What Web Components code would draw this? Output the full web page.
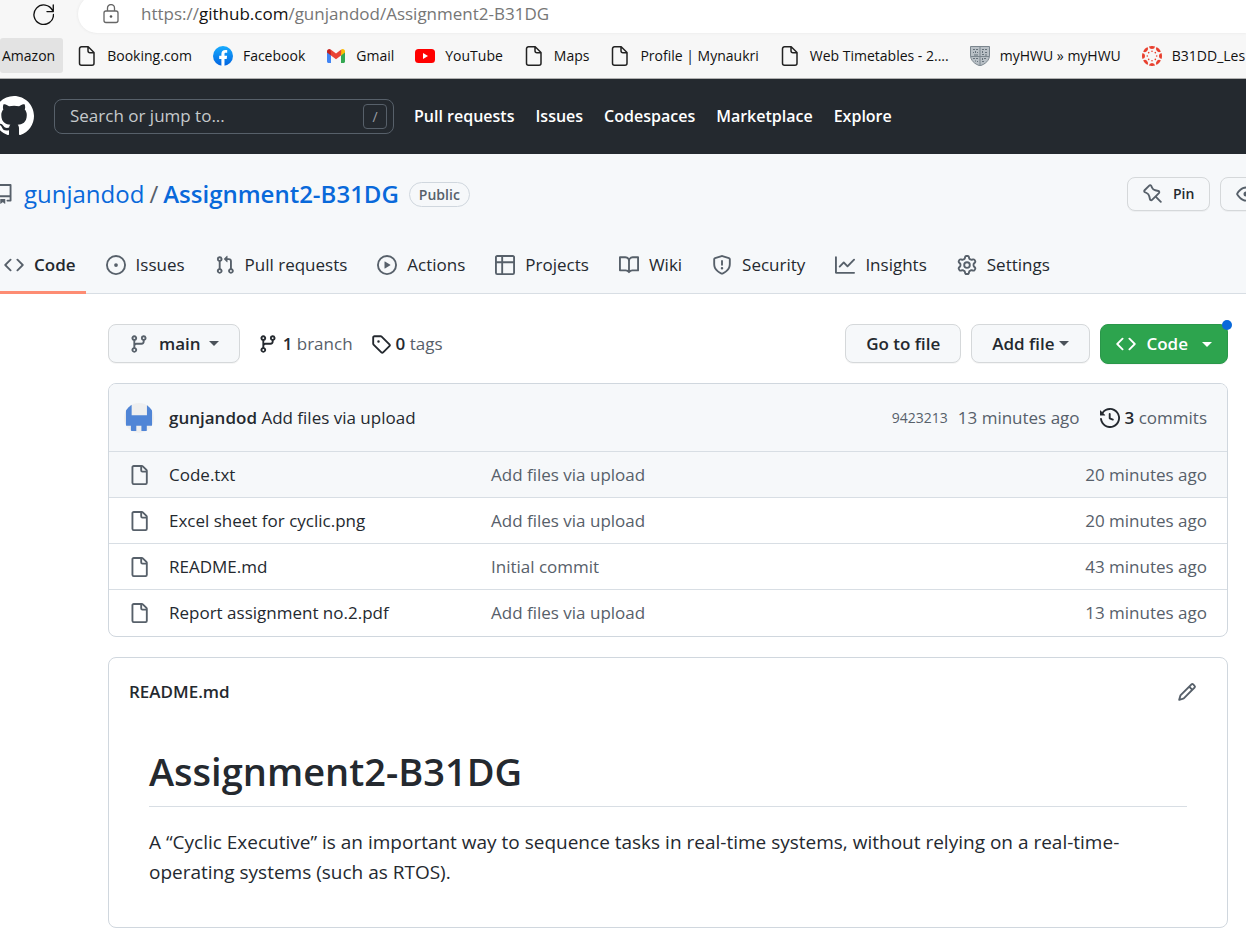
<!DOCTYPE html>
<html lang="en">
<head>
<meta charset="utf-8">
<title>gunjandod/Assignment2-B31DG</title>
<style>
  html { background: #fff; }
  body {
    margin: 0;
    overflow-x: hidden;
    font-family: "Open Sans", "Noto Sans", sans-serif;
    font-size: 17px;
    line-height: 26px;
    color: #24292f;
    --muted: #57606a;
    --link: #0969da;
    --line: #d0d7de;
    --subtle: #f6f8fa;
  }
</style>
</head>
<body>
<browser-bar></browser-bar>
<site-header></site-header>
<repo-header></repo-header>
<repo-page></repo-page>

<script>
const ICONS = {
  mark: 'M8 0C3.58 0 0 3.58 0 8c0 3.54 2.29 6.53 5.47 7.59.4.07.55-.17.55-.38 0-.19-.01-.82-.01-1.49-2.01.37-2.53-.49-2.69-.94-.09-.23-.48-.94-.82-1.13-.28-.15-.68-.52-.01-.53.63-.01 1.08.58 1.23.82.72 1.21 1.87.87 2.33.66.07-.52.28-.87.51-1.07-1.78-.2-3.64-.89-3.64-3.95 0-.87.31-1.59.82-2.15-.08-.2-.36-1.02.08-2.12 0 0 .67-.21 2.2.82.64-.18 1.32-.27 2-.27.68 0 1.36.09 2 .27 1.53-1.04 2.2-.82 2.2-.82.44 1.1.16 1.92.08 2.12.51.56.82 1.27.82 2.15 0 3.07-1.87 3.75-3.65 3.95.29.25.54.73.54 1.48 0 1.07-.01 1.93-.01 2.2 0 .21.15.46.55.38A8.013 8.013 0 0016 8c0-4.42-3.58-8-8-8z',
  repo: 'M2 2.5A2.5 2.5 0 014.5 0h8.75a.75.75 0 01.75.75v12.5a.75.75 0 01-.75.75h-2.5a.75.75 0 110-1.5h1.75v-2h-8a1 1 0 00-.714 1.7.75.75 0 01-1.072 1.05A2.495 2.495 0 012 11.5v-9zm10.5-1V9h-8c-.356 0-.694.074-1 .208V2.5a1 1 0 011-1h8zM5 12.25v3.25a.25.25 0 00.4.2l1.45-1.087a.25.25 0 01.3 0L8.6 15.7a.25.25 0 00.4-.2v-3.25a.25.25 0 00-.25-.25h-3.5a.25.25 0 00-.25.25z',
  code: 'M4.72 3.22a.75.75 0 011.06 1.06L2.06 8l3.72 3.72a.75.75 0 11-1.06 1.06L.47 8.53a.75.75 0 010-1.06l4.25-4.25zm6.56 0a.75.75 0 10-1.06 1.06L13.94 8l-3.72 3.72a.75.75 0 101.06 1.06l4.25-4.25a.75.75 0 000-1.06l-4.25-4.25z',
  issue: 'M8 9.5a1.5 1.5 0 100-3 1.5 1.5 0 000 3zM8 0a8 8 0 100 16A8 8 0 008 0zM1.5 8a6.5 6.5 0 1113 0 6.5 6.5 0 01-13 0z',
  pull: 'M7.177 3.073L9.573.677A.25.25 0 0110 .854v4.792a.25.25 0 01-.427.177L7.177 3.427a.25.25 0 010-.354zM3.75 2.5a.75.75 0 100 1.5.75.75 0 000-1.5zm-2.25.75a2.25 2.25 0 113 2.122v5.256a2.251 2.251 0 11-1.5 0V5.372A2.25 2.25 0 011.5 3.25zM11 2.5h-1V4h1a1 1 0 011 1v5.628a2.251 2.251 0 101.5 0V5A2.5 2.5 0 0011 2.5zm1 10.25a.75.75 0 111.5 0 .75.75 0 01-1.5 0zM3.75 12a.75.75 0 100 1.5.75.75 0 000-1.5z',
  play: 'M1.5 8a6.5 6.5 0 1113 0 6.5 6.5 0 01-13 0zM8 0a8 8 0 100 16A8 8 0 008 0zM6.379 5.227A.25.25 0 006 5.442v5.117a.25.25 0 00.379.214l4.264-2.559a.25.25 0 000-.428L6.379 5.227z',
  table: 'M0 1.75C0 .784.784 0 1.75 0h12.5C15.216 0 16 .784 16 1.75v12.5A1.75 1.75 0 0114.25 16H1.75A1.75 1.75 0 010 14.25V1.75zM1.5 6.5v7.75c0 .138.112.25.25.25H5v-8H1.5zM5 5H1.5V1.75a.25.25 0 01.25-.25H5V5zm1.5 1.5v8h7.75a.25.25 0 00.25-.25V6.5h-8zm8-1.5h-8V1.5h7.75a.25.25 0 01.25.25V5z',
  book: 'M0 1.75A.75.75 0 01.75 1h4.253c1.227 0 2.317.59 3 1.501A3.744 3.744 0 0111.006 1h4.245a.75.75 0 01.75.75v10.5a.75.75 0 01-.75.75h-4.507a2.25 2.25 0 00-1.591.659l-.622.621a.75.75 0 01-1.06 0l-.622-.621A2.25 2.25 0 005.258 13H.75a.75.75 0 01-.75-.75V1.75zm8.755 3a2.25 2.25 0 012.25-2.25H14.5v9h-3.757c-.71 0-1.4.201-1.992.572l.004-7.322zm-1.504 7.324l.004-5.073-.002-2.253A2.25 2.25 0 005.003 2.5H1.5v9h3.757a3.75 3.75 0 011.994.574z',
  shield: 'M7.467.133a1.75 1.75 0 011.066 0l5.25 1.68A1.75 1.75 0 0115 3.48V7c0 1.566-.32 3.182-1.303 4.682-.983 1.498-2.585 2.813-5.032 3.855a1.7 1.7 0 01-1.33 0c-2.447-1.042-4.049-2.357-5.032-3.855C1.32 10.182 1 8.566 1 7V3.48a1.75 1.75 0 011.217-1.667l5.25-1.68zm.61 1.429a.25.25 0 00-.153 0l-5.25 1.68a.25.25 0 00-.174.238V7c0 1.358.275 2.666 1.057 3.86.784 1.194 2.121 2.34 4.366 3.297a.2.2 0 00.154 0c2.245-.956 3.582-2.104 4.366-3.298C13.225 9.666 13.5 8.36 13.5 7V3.48a.25.25 0 00-.174-.237l-5.25-1.68zM9 10.5a1 1 0 11-2 0 1 1 0 012 0zm-.25-5.75a.75.75 0 10-1.5 0v3a.75.75 0 001.5 0v-3z',
  graph: 'M1.5 1.75a.75.75 0 00-1.5 0v12.5c0 .414.336.75.75.75h14.5a.75.75 0 000-1.5H1.5V1.75zm14.28 2.53a.75.75 0 00-1.06-1.06L10 7.94 7.53 5.47a.75.75 0 00-1.06 0L3.22 8.72a.75.75 0 001.06 1.06L7 7.06l2.47 2.47a.75.75 0 001.06 0l5.25-5.25z',
  gear: 'M7.429 1.525a6.593 6.593 0 011.142 0c.036.003.108.036.137.146l.289 1.105c.147.56.55.967.997 1.189.174.086.341.183.501.29.417.278.97.423 1.53.27l1.102-.303c.11-.03.175.016.195.046.219.31.41.641.573.989.014.031.022.11-.059.19l-.815.806c-.411.406-.562.957-.53 1.456a4.588 4.588 0 010 .582c-.032.499.119 1.05.53 1.456l.815.806c.08.08.073.159.059.19a6.494 6.494 0 01-.573.99c-.02.029-.086.074-.195.045l-1.103-.303c-.559-.153-1.112-.008-1.529.27-.16.107-.327.204-.5.29-.449.222-.851.628-.998 1.189l-.289 1.105c-.029.11-.101.143-.137.146a6.613 6.613 0 01-1.142 0c-.036-.003-.108-.037-.137-.146l-.289-1.105c-.147-.56-.55-.967-.997-1.189a4.502 4.502 0 01-.501-.29c-.417-.278-.97-.423-1.53-.27l-1.102.303c-.11.03-.175-.016-.195-.046a6.492 6.492 0 01-.573-.989c-.014-.031-.022-.11.059-.19l.815-.806c.411-.406.562-.957.53-1.456a4.587 4.587 0 010-.582c.032-.499-.119-1.05-.53-1.456l-.815-.806c-.08-.08-.073-.159-.059-.19a6.44 6.44 0 01.573-.99c.02-.029.086-.075.195-.045l1.103.303c.559.153 1.112.008 1.529-.27.16-.107.327-.204.5-.29.449-.222.851-.628.998-1.189l.289-1.105c.029-.11.101-.143.137-.146zM8 0c-.236 0-.47.01-.701.03-.743.065-1.29.615-1.458 1.261l-.29 1.106c-.017.066-.078.158-.211.224a5.994 5.994 0 00-.668.386c-.123.082-.233.09-.3.071L3.27 2.776c-.644-.177-1.392.02-1.82.63a7.977 7.977 0 00-.704 1.217c-.315.675-.111 1.422.363 1.891l.815.806c.05.048.098.147.088.294a6.084 6.084 0 000 .772c.01.147-.038.246-.088.294l-.815.806c-.474.469-.678 1.216-.363 1.891.2.428.436.835.704 1.218.428.609 1.176.806 1.82.63l1.103-.303c.066-.019.176-.011.299.071.213.143.436.272.668.386.133.066.194.158.212.224l.289 1.106c.169.646.715 1.196 1.458 1.26a8.094 8.094 0 001.402 0c.743-.064 1.29-.614 1.458-1.26l.29-1.106c.017-.066.078-.158.211-.224a5.98 5.98 0 00.668-.386c.123-.082.233-.09.3-.071l1.102.302c.644.177 1.392-.02 1.82-.63.268-.382.505-.789.704-1.217.315-.675.111-1.422-.364-1.891l-.814-.806c-.05-.048-.098-.147-.088-.294a6.1 6.1 0 000-.772c-.01-.147.039-.246.088-.294l.814-.806c.475-.469.679-1.216.364-1.891a7.992 7.992 0 00-.704-1.218c-.428-.609-1.176-.806-1.82-.63l-1.103.303c-.066.019-.176.011-.299-.071a5.991 5.991 0 00-.668-.386c-.133-.066-.194-.158-.212-.224L10.16 1.29C9.99.645 9.444.095 8.701.031A8.094 8.094 0 008 0zm1.5 8a1.5 1.5 0 11-3 0 1.5 1.5 0 013 0zM11 8a3 3 0 11-6 0 3 3 0 016 0z',
  branch: 'M11.75 2.5a.75.75 0 100 1.5.75.75 0 000-1.5zm-2.25.75a2.25 2.25 0 113 2.122V6A2.5 2.5 0 0110 8.5H6a1 1 0 00-1 1v1.128a2.251 2.251 0 11-1.5 0V5.372a2.25 2.25 0 111.5 0v1.836A2.492 2.492 0 016 7h4a1 1 0 001-1v-.628A2.25 2.25 0 019.5 3.25zM4.25 12a.75.75 0 100 1.5.75.75 0 000-1.5zM3.5 3.25a.75.75 0 111.5 0 .75.75 0 01-1.5 0z',
  tag: 'M2.5 7.775V2.75a.25.25 0 01.25-.25h5.025a.25.25 0 01.177.073l6.25 6.25a.25.25 0 010 .354l-5.025 5.025a.25.25 0 01-.354 0l-6.25-6.25a.25.25 0 01-.073-.177zm-1.5 0V2.75C1 1.784 1.784 1 2.75 1h5.025c.464 0 .91.184 1.238.513l6.25 6.25a1.75 1.75 0 010 2.474l-5.026 5.026a1.75 1.75 0 01-2.474 0l-6.25-6.25A1.75 1.75 0 011 7.775zM6 5a1 1 0 100 2 1 1 0 000-2z',
  history: 'M1.643 3.143L.427 1.927A.25.25 0 000 2.104V5.75c0 .138.112.25.25.25h3.646a.25.25 0 00.177-.427L2.715 4.215a6.5 6.5 0 11-1.18 4.458.75.75 0 10-1.493.154 8.001 8.001 0 101.6-5.684zM7.75 4a.75.75 0 01.75.75v2.992l2.028.812a.75.75 0 01-.557 1.392l-2.5-1A.75.75 0 017 8.25v-3.5A.75.75 0 017.75 4z',
  file: 'M2 1.75C2 .784 2.784 0 3.75 0h6.586c.464 0 .909.184 1.237.513l2.914 2.914c.329.328.513.773.513 1.237v9.586A1.75 1.75 0 0113.25 16h-9.5A1.75 1.75 0 012 14.25V1.75zm1.75-.25a.25.25 0 00-.25.25v12.5c0 .138.112.25.25.25h9.5a.25.25 0 00.25-.25V6h-2.75A1.75 1.75 0 019 4.25V1.5H3.75zm6.75.062V4.25c0 .138.112.25.25.25h2.688a.252.252 0 00-.011-.013l-2.914-2.914a.272.272 0 00-.013-.011z',
  pencil: 'M11.013 1.427a1.75 1.75 0 012.474 0l1.086 1.086a1.75 1.75 0 010 2.474l-8.61 8.61c-.21.21-.47.364-.756.445l-3.251.93a.75.75 0 01-.927-.928l.929-3.25a1.75 1.75 0 01.445-.758l8.61-8.61zm1.414 1.06a.25.25 0 00-.354 0L10.811 3.75l1.439 1.44 1.263-1.263a.25.25 0 000-.354l-1.086-1.086zM11.189 6.25L9.75 4.81l-6.286 6.287a.25.25 0 00-.064.108l-.558 1.953 1.953-.558a.249.249 0 00.108-.064l6.286-6.286z',
  pin: 'M4.456.734a1.75 1.75 0 012.826.504l.613 1.327a3.081 3.081 0 002.084 1.707l2.454.584c1.332.317 1.8 1.972.832 2.94L11.06 10l3.72 3.72a.75.75 0 11-1.061 1.06L10 11.06l-2.204 2.205c-.968.968-2.623.5-2.94-.832l-.584-2.454a3.081 3.081 0 00-1.707-2.084l-1.327-.613a1.75 1.75 0 01-.504-2.826L4.456.734zM5.92 1.866a.25.25 0 00-.404-.072L1.794 5.516a.25.25 0 00.072.404l1.328.613A4.582 4.582 0 015.73 9.63l.584 2.454a.25.25 0 00.42.12l5.47-5.47a.25.25 0 00-.12-.42L9.63 5.73a4.581 4.581 0 01-3.098-2.537L5.92 1.866z',
  eye: 'M1.679 7.932c.412-.621 1.242-1.75 2.366-2.717C5.175 4.242 6.527 3.5 8 3.5c1.473 0 2.824.742 3.955 1.715 1.124.967 1.954 2.096 2.366 2.717a.119.119 0 010 .136c-.412.621-1.242 1.75-2.366 2.717C10.825 11.758 9.473 12.5 8 12.5c-1.473 0-2.824-.742-3.955-1.715C2.92 9.818 2.09 8.69 1.679 8.068a.119.119 0 010-.136zM8 2c-1.981 0-3.67.992-4.933 2.078C1.797 5.169.88 6.423.43 7.1a1.619 1.619 0 000 1.798c.45.678 1.367 1.932 2.637 3.024C4.329 13.008 6.019 14 8 14c1.981 0 3.67-.992 4.933-2.078 1.27-1.091 2.187-2.345 2.637-3.023a1.619 1.619 0 000-1.798c-.45-.678-1.367-1.932-2.637-3.023C11.671 2.992 9.981 2 8 2zm0 8a2 2 0 100-4 2 2 0 000 4z'
};

const ART = {
  reload: '<path d="M18.6 6.2A9.3 9.3 0 1 0 19.5 10M19.3 1v6.2h-6" fill="none" stroke="#111" stroke-width="1.3" stroke-linecap="round" stroke-linejoin="round"/>',
  lock: '<path d="M5 7h10a2 2 0 0 1 2 2v7.500a2 2 0 0 1-2 2H5a2 2 0 0 1-2-2V9a2 2 0 0 1 2-2zM6.500 7V4a3.500 3.500 0 0 1 7 0V7" fill="none" stroke="#666" stroke-width="1.3"/><circle cx="10" cy="12.500" r="1.300" fill="#555"/>',
  page: '<path d="M4.500.8h6.700L17 6.500v10.700a2 2 0 0 1-2 2H4.500a2 2 0 0 1-2-2V2.800a2 2 0 0 1 2-2zM11 .8v4a2 2 0 0 0 2 2h4" fill="none" stroke="#222" stroke-width="1.500" stroke-linejoin="round"/>',
  facebook: '<defs><linearGradient id="g" x1="0" y1="0" x2="0" y2="1"><stop offset="0" stop-color="#18acfe"/><stop offset="1" stop-color="#0163e0"/></linearGradient></defs><circle cx="10" cy="10" r="10" fill="url(#g)"/><path d="M8.400 19.900v-7H6.200V9.800h2.200V8.100c0-2.800 1.500-4.200 3.900-4.200.8 0 1.400.1 1.900.2v2.600h-1.400c-1 0-1.300.5-1.300 1.300v1.800h2.600l-.4 3.100h-2.200v7a10 10 0 0 1-3.100 0z" fill="#fff"/>',
  gmail: '<path d="M1 5v10.500C1 16.300 1.700 17 2.500 17H5V9.200z" fill="#4285f4"/><path d="M19 5v10.500c0 .8-.7 1.500-1.500 1.500H15V9.200z" fill="#34a853"/><path d="M15 4.500v5l4-3V5.200c0-2-2.300-3-3.700-1.800z" fill="#fbbc04"/><path d="M1 5.200v1.300l4 3v-5l-.3-1.100C3.300 2.200 1 3.200 1 5.200z" fill="#c5221f"/><path d="M4.700 3.400L10 7.500l5.300-4.100-.3 6.100-5 3.800-5-3.800z" fill="#ea4335"/>',
  youtube: '<rect y="3" width="20" height="14" rx="3.500" fill="#f00"/><path d="M8 7v6l5-3z" fill="#fff"/>',
  crest: '<path d="M.5.5h19V9c0 5.500-4 9-9.500 10.800C4.500 18 .5 14.500.5 9z" fill="#b9c0c6" stroke="#7b868e"/><path d="M3 3h2v1H3zM6 3h2v1H6zM3 6h1v1H3zM5 5h1v2H5zM7 6h1v1H7zM4 8.500h4v1H4zM12 3h2v1h-2zM15 3h2v1h-2zM15 6h2v1h-2zM12 5h1v2h-1zM12 8h2v1h-2zM15 8.500h2v1h-2zM3 12h2v1H3zM6 12h2v1H6zM5 14.500h1v1H5zM7 15h1v1H7zM12 12h1v2h-1zM14 12h2v1h-2zM12 15h2v1h-2z" fill="#66727b"/><path d="M10 1v18M1 10.500h18" stroke="#7b868e"/>',
  canvas: '<g fill="#e8402f"><path id="p" d="M6.900.5a10 10 0 0 1 6.200 0 3.150 3.150 0 0 1-6.200 0z"/><use href="#p" transform="rotate(45 10 10)"/><use href="#p" transform="rotate(90 10 10)"/><use href="#p" transform="rotate(135 10 10)"/><use href="#p" transform="rotate(180 10 10)"/><use href="#p" transform="rotate(225 10 10)"/><use href="#p" transform="rotate(270 10 10)"/><use href="#p" transform="rotate(315 10 10)"/><circle id="c" cx="10" cy="5.300" r=".8"/><use href="#c" transform="rotate(45 10 10)"/><use href="#c" transform="rotate(90 10 10)"/><use href="#c" transform="rotate(135 10 10)"/><use href="#c" transform="rotate(180 10 10)"/><use href="#c" transform="rotate(225 10 10)"/><use href="#c" transform="rotate(270 10 10)"/><use href="#c" transform="rotate(315 10 10)"/></g>',
  avatar: '<clipPath id="k"><circle cx="10" cy="10" r="10"/></clipPath><g clip-path="url(#k)"><path d="M0 0h20v20H0z" fill="#efefef"/><path d="M1.300 0h3.800v8.200h10.200V0h3.400v15.200h-3.500v3.400h-3.600v-3.400H8.200v3.400H4.600v-3.400H1.300z" fill="#5085d6"/></g>'
};

const define = (name, html, setup) => {
  const template = document.createElement('template');
  template.innerHTML = '<style>*{box-sizing:border-box}a{color:inherit;text-decoration:none}</style>' + html;
  customElements.define(name, class extends HTMLElement {
    constructor() {
      super();
      this.attachShadow({ mode: 'open' }).append(template.content.cloneNode(true));
    }
    connectedCallback() { if (setup) setup(this, this.shadowRoot); }
  });
};

define('ui-icon', `
  <style>
    :host { display: inline-flex; flex: none; width: var(--size, 20px); height: var(--size, 20px); }
    svg { display: block; width: 100%; height: 100%; fill: currentColor; }
  </style>
  <svg aria-hidden="true"></svg>`, (host, root) => {
  const name = host.getAttribute('name');
  if (!name) return;
  const svg = root.querySelector('svg');
  svg.setAttribute('viewBox', ART[name] ? '0 0 20 20' : '0 0 16 16');
  svg.innerHTML = ART[name] || `<path fill-rule="evenodd" d="${ICONS[name]}"/>`;
});

define('book-mark', `
  <style>
    :host { display: block; flex: none; font-size: 14px; line-height: 35px; color: #111; }
    a { display: flex; align-items: center; gap: 10px; height: 35px; padding: 0 10px; border-radius: 3px; white-space: nowrap; }
    :host([active]) a { background: #e3e3e3; padding: 0 8px 0 2px; }
    :host([active]) { padding-right: 3px; }
  </style>
  <a href="#"><slot name="icon"></slot><slot></slot></a>`);

define('browser-bar', `
  <style>
    :host { display: block; background: #f7f7f7; border-bottom: 1px solid #b0b0b0; overflow: hidden; }
    .top { display: flex; height: 33px; padding-left: 33px; gap: 24px; }
    .reload { display: flex; width: 21px; height: 28px; padding: 0; border: 0; background: none; align-items: center; }
    .address { flex: 1; display: flex; align-items: center; gap: 20px; height: 38px; margin-top: -5px; padding-left: 23px; border-radius: 19px 0 0 19px; background: #fff; box-shadow: 0 0 3px #e4e4e4; font-size: 17px; color: #767676; white-space: nowrap; }
    .address b { font-weight: 400; color: #111; }
    .marks { display: flex; gap: 1px; padding: 5px 0; }
  </style>
  <div class="top">
    <button class="reload" type="button" aria-label="Reload"><ui-icon name="reload" style="--size:21px"></ui-icon></button>
    <div class="address"><ui-icon name="lock"></ui-icon><span role="textbox" tabindex="0" aria-label="Address">https://<b>github.com</b>/gunjandod/Assignment2-B31DG</span></div>
  </div>
  <nav class="marks" aria-label="Favourites">
    <book-mark active>Amazon</book-mark>
    <book-mark><ui-icon slot="icon" name="page"></ui-icon>Booking.com</book-mark>
    <book-mark><ui-icon slot="icon" name="facebook"></ui-icon>Facebook</book-mark>
    <book-mark><ui-icon slot="icon" name="gmail"></ui-icon>Gmail</book-mark>
    <book-mark><ui-icon slot="icon" name="youtube"></ui-icon>YouTube</book-mark>
    <book-mark><ui-icon slot="icon" name="page"></ui-icon>Maps</book-mark>
    <book-mark><ui-icon slot="icon" name="page"></ui-icon>Profile | Mynaukri</book-mark>
    <book-mark><ui-icon slot="icon" name="page"></ui-icon>Web Timetables - 2....</book-mark>
    <book-mark><ui-icon slot="icon" name="crest"></ui-icon>myHWU » myHWU</book-mark>
    <book-mark><ui-icon slot="icon" name="canvas"></ui-icon>B31DD_Les</book-mark>
  </nav>`);

define('site-header', `
  <style>
    :host { display: flex; align-items: center; gap: 20px; padding: 17px 20px 18px 0; background: #24292f; color: #fff; }
    .home { display: flex; justify-content: flex-end; width: 34px; overflow: hidden; }
    .search { display: flex; align-items: center; width: 340px; height: 35px; padding: 0 6px 0 15px; border: 1px solid #57606a; border-radius: 8px; }
    input { flex: 1; min-width: 0; padding: 0; border: 0; outline: 0; background: none; font: inherit; color: #fff; }
    input::placeholder { color: #c6c9cc; opacity: 1; }
    kbd { width: 24px; height: 25px; border: 1px solid #57606a; border-radius: 4px; font: inherit; font-size: 14px; line-height: 23px; text-align: center; color: #9a9fa5; }
    nav { display: flex; gap: 21px; font-size: 16px; font-weight: 600; white-space: nowrap; }
  </style>
  <a class="home" href="#" aria-label="Homepage"><ui-icon name="mark" style="--size:40px"></ui-icon></a>
  <label class="search"><input type="text" placeholder="Search or jump to..." aria-label="Search or jump to"><kbd>/</kbd></label>
  <nav><a href="#">Pull requests</a><a href="#">Issues</a><a href="#">Codespaces</a><a href="#">Marketplace</a><a href="#">Explore</a></nav>`);

define('repo-tab', `
  <style>
    :host { display: block; flex: none; }
    a { display: flex; align-items: center; gap: 10px; height: 59px; padding: 3px 10px 0; white-space: nowrap; border-bottom: 3px solid transparent; }
    .icon { display: flex; color: var(--muted); }
    :host([selected]) a { font-weight: 600; border-color: #fd8c73; }
  </style>
  <a href="#"><span class="icon"></span><slot></slot></a>`, (host, root) => {
  root.querySelector('.icon').innerHTML = `<ui-icon name="${host.getAttribute('icon')}"></ui-icon>`;
});

define('gh-button', `
  <style>
    :host { display: block; flex: none; position: relative; }
    button { display: flex; align-items: center; justify-content: center; gap: 10px; height: 39px; padding: 0 20px; border: 1px solid #d5d8da; border-radius: 8px; background: var(--subtle); box-shadow: 0 1px 0 rgba(27,31,36,.04); color: inherit; font: inherit; font-weight: 600; white-space: nowrap; }
    :host([small]) button { height: 34px; padding: 0 15px; font-size: 14px; }
    :host([primary]) button { height: 40px; padding: 0 15px; background: #2da44e; border-color: #2a974a; color: #fff; }
    ::slotted(ui-icon) { color: var(--icon, #57606a); }
    :host([primary]) ::slotted(ui-icon) { color: #fff; }
    .caret { display: none; margin-left: -2px; border: 5px solid transparent; border-bottom: 0; border-top-color: #4b525a; }
    :host([caret]) .caret { display: block; }
    :host([primary]) .caret { margin-left: 4px; border-top-color: #fff; }
    :host([tight]) button { gap: 7px; }
    .dot { display: none; position: absolute; top: -4px; right: -4px; width: 10px; height: 10px; border-radius: 50%; background: var(--link); }
    :host([dot]) .dot { display: block; }
  </style>
  <button type="button"><slot name="icon"></slot><span><slot></slot></span><span class="caret"></span></button><span class="dot"></span>`, (host, root) => {
  const label = host.getAttribute('label');
  if (label) root.querySelector('button').setAttribute('aria-label', label);
});

define('repo-header', `
  <style>
    :host { display: block; padding-top: 23px; background: var(--subtle); border-bottom: 1px solid #d8dee4; }
    .title { display: flex; align-items: center; gap: 10px; height: 34px; }
    .glyph { display: flex; justify-content: flex-end; width: 14px; color: var(--muted); }
    h1 { display: flex; gap: 5px; margin: 0; font-size: 24px; line-height: 34px; font-weight: 400; color: var(--link); white-space: nowrap; }
    h1 i { font-style: normal; color: var(--muted); }
    h1 strong { font-weight: 600; }
    .badge { height: 25px; padding: 0 9px; border: 1px solid var(--line); border-radius: 13px; font-size: 14px; line-height: 23px; font-weight: 600; color: var(--muted); }
    .actions { display: flex; gap: 10px; width: 119px; margin-left: auto; }
    .tabs { display: flex; height: 58px; margin-top: 24px; }
    .bleed { display: flex; gap: 10px; height: 59px; margin-left: -6px; }
  </style>
  <div class="title">
    <span class="glyph"><ui-icon name="repo"></ui-icon></span>
    <h1><a href="#">gunjandod</a><i>/</i><a href="#"><strong>Assignment2-B31DG</strong></a></h1>
    <span class="badge">Public</span>
    <div class="actions">
      <gh-button small><ui-icon slot="icon" name="pin"></ui-icon>Pin</gh-button>
      <gh-button small label="Watch"><ui-icon slot="icon" name="eye"></ui-icon></gh-button>
    </div>
  </div>
  <nav class="tabs" aria-label="Repository">
    <div class="bleed">
      <repo-tab icon="code" selected>Code</repo-tab>
      <repo-tab icon="issue">Issues</repo-tab>
      <repo-tab icon="pull">Pull requests</repo-tab>
      <repo-tab icon="play">Actions</repo-tab>
      <repo-tab icon="table">Projects</repo-tab>
      <repo-tab icon="book">Wiki</repo-tab>
      <repo-tab icon="shield">Security</repo-tab>
      <repo-tab icon="graph">Insights</repo-tab>
      <repo-tab icon="gear">Settings</repo-tab>
    </div>
  </nav>`);

define('file-list', `
  <style>
    :host { display: block; border: 1px solid var(--line); border-radius: 8px; overflow: hidden; color: var(--muted); }
    .commit { display: flex; align-items: center; gap: 10px; height: 67px; padding: 0 20px 0 15px; background: var(--subtle); white-space: nowrap; }
    .who { margin-left: 5px; margin-right: auto; color: #24292f; }
    strong { font-weight: 600; color: #24292f; }
    .hash { font-size: 14px; }
    .total { display: flex; align-items: center; gap: 5px; margin-left: 10px; }
    .total ui-icon { color: #24292f; }
    table { width: 100%; border-collapse: collapse; table-layout: fixed; }
    td { height: 46px; padding: 0; border-top: 1px solid #d8dee4; white-space: nowrap; }
    tr:first-child td { background: var(--subtle); }
    .kind { width: 60px; padding-left: 20px; }
    .kind ui-icon { display: flex; }
    .name { width: 322px; color: #24292f; }
    .age { width: 180px; padding-right: 20px; text-align: right; }
  </style>
  <div class="commit">
    <ui-icon name="avatar" style="--size:30px"></ui-icon>
    <span class="who"><a href="#"><strong>gunjandod</strong></a> <a href="#">Add files via upload</a></span>
    <a class="hash" href="#">9423213</a><a href="#">13 minutes ago</a>
    <a class="total" href="#"><ui-icon name="history"></ui-icon><span><strong>3</strong> commits</span></a>
  </div>
  <table><tbody></tbody></table>`, (host, root) => {
  const files = [
    ['Code.txt', 'Add files via upload', '20 minutes ago'],
    ['Excel sheet for cyclic.png', 'Add files via upload', '20 minutes ago'],
    ['README.md', 'Initial commit', '43 minutes ago'],
    ['Report assignment no.2.pdf', 'Add files via upload', '13 minutes ago']
  ];
  root.querySelector('tbody').innerHTML = files.map(([name, message, age]) =>
    `<tr><td class="kind"><ui-icon name="file"></ui-icon></td><td class="name"><a href="#">${name}</a></td><td><a href="#">${message}</a></td><td class="age">${age}</td></tr>`).join('');
});

define('readme-card', `
  <style>
    :host { display: block; border: 1px solid var(--line); border-radius: 8px; }
    header { display: flex; align-items: center; justify-content: space-between; height: 68px; padding: 0 30px 0 20px; }
    h2 { margin: 0; font-size: 17px; line-height: 26px; font-weight: 600; }
    button { display: flex; padding: 0; border: 0; background: none; color: var(--muted); }
    article { padding: 20px 40px 40px; font-size: 19px; line-height: 30px; }
    ::slotted(h1) { margin: 0 0 20px; padding-bottom: 10px; border-bottom: 1px solid #d8dee4; font-size: 38px; line-height: 50px; font-weight: 600; }
    ::slotted(p) { margin: 0; }
  </style>
  <header><h2><a href="#">README.md</a></h2><button type="button" aria-label="Edit"><ui-icon name="pencil"></ui-icon></button></header>
  <article><slot></slot></article>`);

define('repo-page', `
  <style>
    :host { display: flex; flex-direction: column; gap: 20px; padding: 30px 18px 7px 108px; }
    .bar { display: flex; align-items: center; gap: 18px; height: 39px; white-space: nowrap; }
    .count { display: flex; align-items: center; gap: 5px; color: var(--muted); }
    .count ui-icon, .count strong { color: #24292f; font-weight: 600; }
    .right { display: flex; gap: 10px; height: 39px; margin-left: auto; }
  </style>
  <div class="bar">
    <gh-button caret><ui-icon slot="icon" name="branch"></ui-icon>main</gh-button>
    <a class="count" href="#"><ui-icon name="branch"></ui-icon><span><strong>1</strong> branch</span></a>
    <a class="count" href="#"><ui-icon name="tag"></ui-icon><span><strong>0</strong> tags</span></a>
    <div class="right">
      <gh-button>Go to file</gh-button>
      <gh-button caret tight>Add file</gh-button>
      <gh-button primary caret dot><ui-icon slot="icon" name="code"></ui-icon>Code</gh-button>
    </div>
  </div>
  <file-list></file-list>
  <readme-card>
    <h1>Assignment2-B31DG</h1>
    <p>A “Cyclic Executive” is an important way to sequence tasks in real-time systems, without relying on a real-time-operating systems (such as RTOS).</p>
  </readme-card>`);
</script>
</body>
</html>
